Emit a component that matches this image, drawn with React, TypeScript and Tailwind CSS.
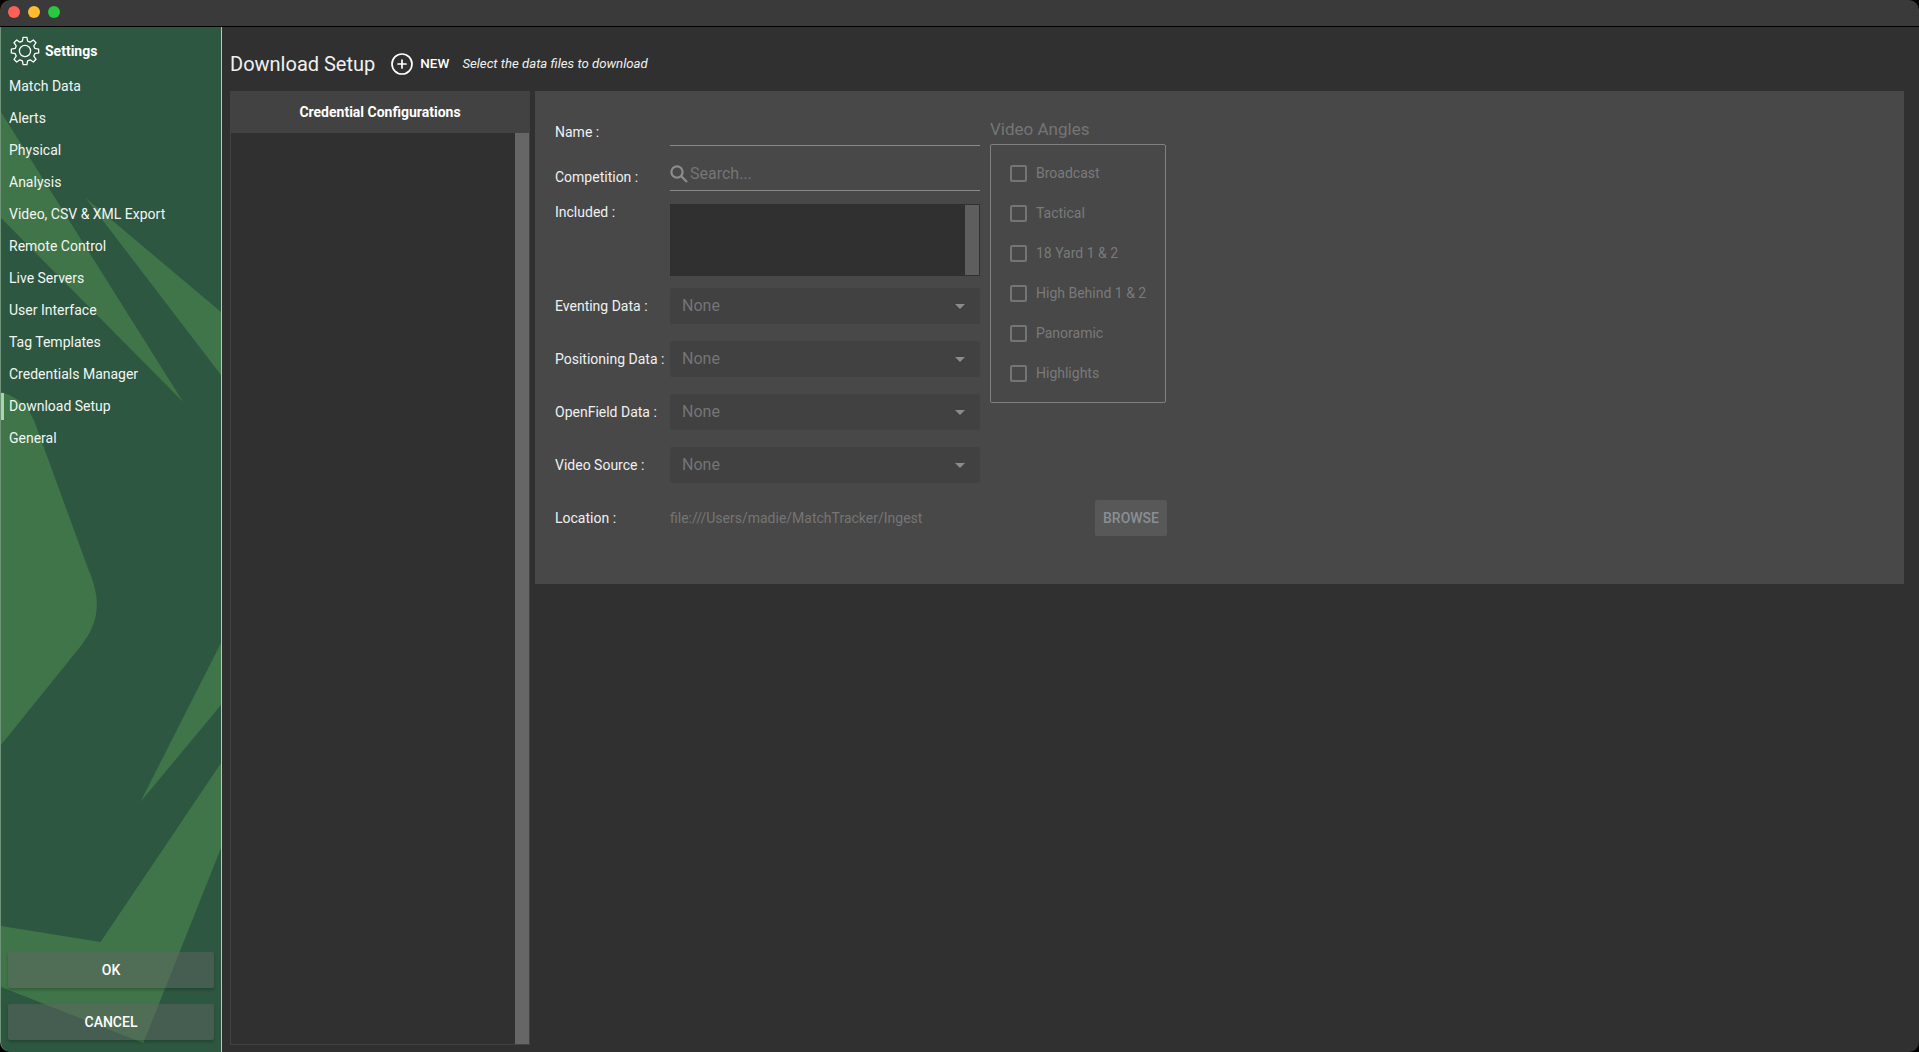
import { CirclePlus } from 'lucide-react';

const navItems = [
  'Match Data',
  'Alerts',
  'Physical',
  'Analysis',
  'Video, CSV & XML Export',
  'Remote Control',
  'Live Servers',
  'User Interface',
  'Tag Templates',
  'Credentials Manager',
  'Download Setup',
  'General',
];

const selects = ['Eventing Data :', 'Positioning Data :', 'OpenField Data :', 'Video Source :'];
const angles = ['Broadcast', 'Tactical', '18 Yard 1 & 2', 'High Behind 1 & 2', 'Panoramic', 'Highlights'];

function SidebarArt() {
  return (
    <svg className="absolute inset-0 h-full w-full" viewBox="0 0 221 1025" preserveAspectRatio="none">
      <g fill="#3f7549" transform="translate(0 -27)">
        <path d="M0 112 L183 402 L0 218 Z" />
        <path d="M85 198 L221 312 L221 375 Z" />
        <path d="M0 392 C14 396 25 403 33 420 L88 570 C100 598 100 620 81 645 L0 745 Z" />
        <path d="M221 643 L140 802 L221 705 Z" />
        <path d="M221 763 L100 942 L0 926 L0 987 L143 1043 L221 848 Z" />
      </g>
    </svg>
  );
}

// eight toothed outline, same shape as the app's settings glyph
function GearIcon() {
  const points: string[] = [];
  for (let i = 0; i < 8; i++) {
    const a = (i * Math.PI) / 4 - Math.PI / 2;
    const at = (r: number, d: number) => `${(15 + r * Math.cos(a + d)).toFixed(2)} ${(15 + r * Math.sin(a + d)).toFixed(2)}`;
    points.push(at(10.2, -0.26), at(13.8, -0.14), at(13.8, 0.14), at(10.2, 0.26));
  }
  return (
    <svg className="h-[30px] w-[30px] shrink-0" viewBox="0 0 30 30" fill="none" stroke="#ffffff" strokeWidth="1.3" strokeLinejoin="round">
      <path d={`M${points.join(' L')} Z`} />
      <circle cx="15" cy="15" r="5.6" />
    </svg>
  );
}

function Sidebar() {
  return (
    <aside className="relative flex w-[222px] shrink-0 flex-col overflow-hidden rounded-bl-[10px] border-r border-l border-r-[#a5d6a7] border-l-[#6f9479] bg-[#2d5740]">
      <SidebarArt />
      <div className="relative flex h-[43px] items-center pt-[5px] pl-[9px]">
        <GearIcon />
        <span className="ml-[5px] text-[14px] font-bold text-white">Settings</span>
      </div>
      <nav className="relative flex flex-col">
        {navItems.map((item) => (
          <div key={item} className="relative flex h-[32px] items-center pl-[8px] text-[14px] text-[#f2f6f2]">
            {item === 'Download Setup' && <span className="absolute top-[3px] left-[-1px] h-[27px] w-[4px] bg-[#a5d6a7]" />}
            {item}
          </div>
        ))}
      </nav>
      <div className="relative mt-auto flex flex-col gap-[16px] pr-[7px] pb-[12px] pl-[7px]">
        {['OK', 'CANCEL'].map((label) => (
          <button
            key={label}
            className="h-[36px] rounded-[2px] bg-[#66666673] text-[14px] font-medium text-white shadow-[0_2px_3px_rgba(0,0,0,0.2)]"
          >
            {label}
          </button>
        ))}
      </div>
    </aside>
  );
}

function CredentialPanel() {
  return (
    <section className="flex w-[300px] shrink-0 flex-col">
      <div className="flex h-[42px] items-center justify-center bg-[#424242] text-[14px] font-bold text-white">
        Credential Configurations
      </div>
      <div className="flex flex-1 justify-end border-x border-b border-[#424242] bg-[#303030]">
        <div className="w-[14px] bg-[#666666]" />
      </div>
    </section>
  );
}

function Underline({ children }: { children?: React.ReactNode }) {
  return <div className="flex h-[33px] w-[310px] items-center border-b border-[#8a8a8a]">{children}</div>;
}

function SelectRow({ label }: { label: string }) {
  return (
    <div className="mt-[17px] flex items-center first:mt-[12px]">
      <span className="w-[115px] text-[14px] text-[#f0f0f0]">{label}</span>
      <div className="flex h-[36px] w-[310px] items-center justify-between rounded-[2px] bg-[#414141] pr-[15px] pl-[12px]">
        <span className="text-[16px] text-[#757575]">None</span>
        <span className="h-0 w-0 border-x-[5px] border-t-[5px] border-x-transparent border-t-[#8c8c8c]" />
      </div>
    </div>
  );
}

function DownloadForm() {
  return (
    <section className="h-[493px] flex-1 bg-[#484848] pt-[22px] pl-[20px]">
      <div className="flex gap-[10px]">
        <div className="flex w-[425px] flex-col">
          <div className="flex items-start">
            <span className="w-[115px] pt-[9px] text-[14px] text-[#f0f0f0]">Name :</span>
            <Underline />
          </div>
          <div className="mt-[12px] flex items-start">
            <span className="w-[115px] pt-[9px] text-[14px] text-[#f0f0f0]">Competition :</span>
            <Underline>
              <svg className="h-[18px] w-[18px] shrink-0" viewBox="0 0 18 18" fill="none" stroke="#8c8c8c" strokeWidth="2.2">
                <circle cx="7" cy="7" r="5.6" />
                <path d="M11 11 L17 17" />
              </svg>
              <span className="ml-[2px] text-[16px] text-[#757575]">Search...</span>
            </Underline>
          </div>
          <div className="mt-[13px] flex items-start">
            <span className="w-[115px] text-[14px] leading-[16px] text-[#f0f0f0]">Included :</span>
            <div className="flex h-[72px] w-[310px] justify-end border border-[#303030] bg-[#303030]">
              <div className="w-[14px] bg-[#5e5e5e]" />
            </div>
          </div>
          <div className="flex flex-col">
            {selects.map((label) => (
              <SelectRow key={label} label={label} />
            ))}
          </div>
        </div>
        <div className="mt-[6px] w-[176px] shrink-0">
          <div className="h-[25px] text-[17px] leading-[20px] text-[#757575]">Video Angles</div>
          <div className="h-[259px] rounded-[2px] border border-[#808080] pt-[8px] pl-[19px]">
            {angles.map((angle) => (
              <div key={angle} className="flex h-[40px] items-center gap-[9px]">
                <span className="h-[17px] w-[17px] rounded-[2px] border-2 border-[#757575]" />
                <span className="text-[14px] text-[#7a7a7a]">{angle}</span>
              </div>
            ))}
          </div>
        </div>
      </div>
      <div className="mt-[17px] flex h-[36px] w-[612px] items-center">
        <span className="w-[115px] text-[14px] text-[#f0f0f0]">Location :</span>
        <span className="text-[14px] text-[#757575]">file:///Users/madie/MatchTracker/Ingest</span>
        <button className="ml-auto h-[36px] w-[72px] rounded-[2px] bg-[#585858] text-[14px] font-medium text-[#8a8f94]">
          BROWSE
        </button>
      </div>
    </section>
  );
}

export default function App() {
  return (
    <div className="flex h-[1052px] w-[1919px] flex-col overflow-hidden bg-black font-['Roboto',sans-serif]">
      <div className="flex h-[27px] shrink-0 items-start gap-[8px] rounded-t-[10px] border-b border-black bg-[#3a3a3a] pt-[6px] pl-[8px]">
        <span className="h-[12px] w-[12px] rounded-full bg-[#ff5f57]" />
        <span className="h-[12px] w-[12px] rounded-full bg-[#febc2e]" />
        <span className="h-[12px] w-[12px] rounded-full bg-[#28c840]" />
      </div>
      <div className="flex flex-1 overflow-hidden rounded-b-[10px] bg-[#303030]">
        <Sidebar />
        <main className="flex flex-1 flex-col pr-[15px] pb-[7px] pl-[8px]">
          <header className="flex h-[64px] shrink-0 items-center pt-[9px] text-white">
            <h1 className="text-[20px] font-normal text-[#f0f0f0]">Download Setup</h1>
            <CirclePlus className="ml-[15px] h-[24px] w-[24px]" strokeWidth={1.7} />
            <span className="ml-[6px] text-[13.5px] font-medium">NEW</span>
            <span className="ml-[13px] text-[13.2px] italic text-[#f0f0f0]">Select the data files to download</span>
          </header>
          <div className="flex flex-1 gap-[5px]">
            <CredentialPanel />
            <DownloadForm />
          </div>
        </main>
      </div>
    </div>
  );
}
